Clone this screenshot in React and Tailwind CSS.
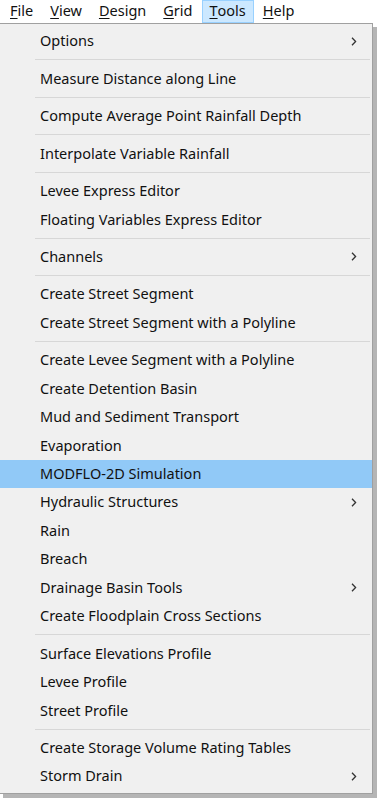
const menuBar = [
  { label: "File", key: "F", rest: "ile" },
  { label: "View", key: "V", rest: "iew" },
  { label: "Design", key: "D", rest: "esign" },
  { label: "Grid", key: "G", rest: "rid" },
  { label: "Tools", key: "T", rest: "ools", active: true },
  { label: "Help", key: "H", rest: "elp" },
];

// "-" marks a separator
const items = [
  { label: "Options", sub: true },
  "-",
  { label: "Measure Distance along Line" },
  "-",
  { label: "Compute Average Point Rainfall Depth" },
  "-",
  { label: "Interpolate Variable Rainfall" },
  "-",
  { label: "Levee Express Editor" },
  { label: "Floating Variables Express Editor" },
  "-",
  { label: "Channels", sub: true },
  "-",
  { label: "Create Street Segment" },
  { label: "Create Street Segment with a Polyline" },
  "-",
  { label: "Create Levee Segment with a Polyline" },
  { label: "Create Detention Basin" },
  { label: "Mud and Sediment Transport" },
  { label: "Evaporation" },
  { label: "MODFLO-2D Simulation", active: true },
  { label: "Hydraulic Structures", sub: true },
  { label: "Rain" },
  { label: "Breach" },
  { label: "Drainage Basin Tools", sub: true },
  { label: "Create Floodplain Cross Sections" },
  "-",
  { label: "Surface Elevations Profile" },
  { label: "Levee Profile" },
  { label: "Street Profile" },
  "-",
  { label: "Create Storage Volume Rating Tables" },
  { label: "Storm Drain", sub: true },
];

function Chevron() {
  return (
    <svg width="6" height="9" viewBox="0 0 6 9" className="text-[#333]">
      <path d="M1 0.8 L4.6 4.5 L1 8.2" fill="none" stroke="currentColor" strokeWidth="1.3" />
    </svg>
  );
}

export default function App() {
  return (
    <div
      className="w-[379px] h-[798px] bg-white text-[#111] overflow-hidden"
      style={{ fontFamily: '"Noto Sans", "Open Sans", sans-serif' }}
    >
      <div className="flex h-[23px] items-stretch gap-[1px] text-[14.5px] pl-[2px]">
        {menuBar.map((m) => (
          <div
            key={m.label}
            className={
              "flex items-center px-[7px] pb-[1px] border " +
              (m.active ? "bg-[#cce8ff] border-[#99d1ff]" : "border-transparent")
            }
          >
            <span className="underline underline-offset-2 decoration-1">{m.key}</span>
            <span>{m.rest}</span>
          </div>
        ))}
      </div>

      <div className="flex">
        <div className="flex flex-col">
          <div className="w-[373px] bg-[#f0f0f0] border-t border-r border-b border-[#a0a0a0] pt-[3px] pb-[2px] text-[14.5px]">
            {items.map((it, i) =>
              it === "-" ? (
                <div key={i} className="h-[9px] flex items-center pl-[35px] pr-[2px]">
                  <div className="h-px w-full bg-[#d7d7d7]" />
                </div>
              ) : (
                <div
                  key={i}
                  className={
                    "h-[28.45px] flex items-center pl-[40px] pr-[15px] " +
                    (it.active ? "bg-[#91c9f7]" : "")
                  }
                >
                  <span className="flex-1 whitespace-nowrap">{it.label}</span>
                  {it.sub && <Chevron />}
                </div>
              )
            )}
          </div>
          <div className="h-[4px] ml-[3px] bg-[#b5b5b5]" />
        </div>
        <div className="w-[4px] mt-[4px] bg-[#b5b5b5]" />
      </div>
    </div>
  );
}
